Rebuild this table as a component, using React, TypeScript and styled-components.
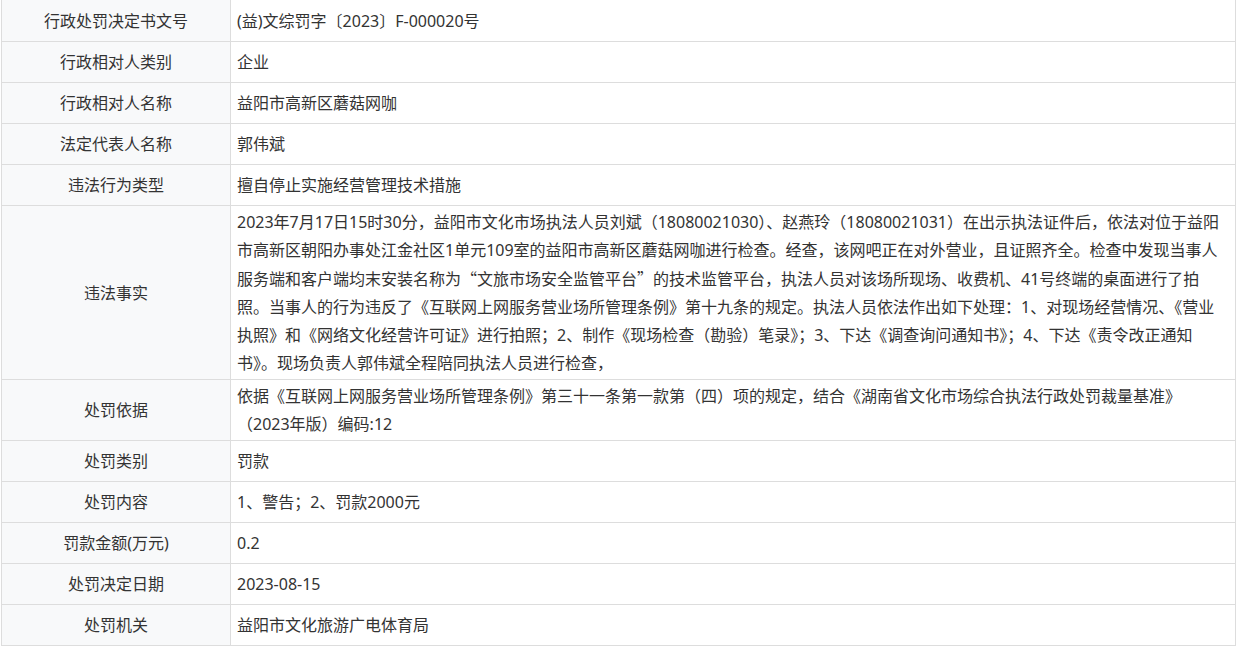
import React from "react";
import styled, { createGlobalStyle } from "styled-components";

const GlobalStyle = createGlobalStyle`
  html, body {
    margin: 0;
    padding: 0;
    background: #ffffff;
  }
  body {
    font-family: "Noto Sans", "Noto Sans CJK SC", sans-serif;
    color: #333333;
  }
`;

const Page = styled.div`
  padding: 0 2px 0 1px;
`;

const Table = styled.div`
  display: flex;
  flex-direction: column;
  border: 1px solid #dddddd;
  border-top: none;
  font-size: 16px;
  line-height: 28px;
`;

const Row = styled.div`
  display: grid;
  grid-template-columns: 229px 1fr;
  min-height: 40px;
  border-bottom: 1px solid #dddddd;
  &:first-child {
    min-height: 41px;
  }
  &:last-child {
    border-bottom: none;
  }
`;

const Label = styled.div`
  display: flex;
  align-items: center;
  justify-content: center;
  text-align: center;
  padding: 2px 6px;
  background: #f8f9fa;
  border-right: 1px solid #dddddd;
  color: #333333;
`;

const Value = styled.div`
  display: flex;
  align-items: center;
  padding: 2px 10px 2px 6px;
  background: #ffffff;
  color: #333333;
  word-break: normal;
  line-break: strict;
`;

const Text = styled.div`
  width: 100%;
`;

const Quote = styled.span<{ $open?: boolean }>`
  display: inline-block;
  width: 1em;
  text-align: ${(p) => (p.$open ? "right" : "left")};
  font-family: "Noto Sans CJK SC", sans-serif;
`;

type Item = { label: string; value: React.ReactNode };

const items: Item[] = [
  { label: "行政处罚决定书文号", value: "(益)文综罚字〔2023〕F-000020号" },
  { label: "行政相对人类别", value: "企业" },
  { label: "行政相对人名称", value: "益阳市高新区蘑菇网咖" },
  { label: "法定代表人名称", value: "郭伟斌" },
  { label: "违法行为类型", value: "擅自停止实施经营管理技术措施" },
  {
    label: "违法事实",
    value: (
      <>
        2023年7月17日15时30分，益阳市文化市场执法人员刘斌（18080021030）、赵燕玲（18080021031）在出示执法证件后，依法对位于益阳市高新区朝阳办事处江金社区1单元109室的益阳市高新区蘑菇网咖进行检查。经查，该网吧正在对外营业，且证照齐全。检查中发现当事人服务端和客户端均末安装名称为
        <Quote $open>“</Quote>文旅市场安全监管平台<Quote>”</Quote>
        的技术监管平台，执法人员对该场所现场、收费机、41号终端的桌面进行了拍照。当事人的行为违反了《互联网上网服务营业场所管理条例》第十九条的规定。执法人员依法作出如下处理：1、对现场经营情况、《营业执照》和《网络文化经营许可证》进行拍照；2、制作《现场检查（勘验）笔录》；3、下达《调查询问通知书》；4、下达《责令改正通知书》。现场负责人郭伟斌全程陪同执法人员进行检查，
      </>
    ),
  },
  {
    label: "处罚依据",
    value:
      "依据《互联网上网服务营业场所管理条例》第三十一条第一款第（四）项的规定，结合《湖南省文化市场综合执法行政处罚裁量基准》（2023年版）编码:12",
  },
  { label: "处罚类别", value: "罚款" },
  { label: "处罚内容", value: "1、警告；2、罚款2000元" },
  { label: "罚款金额(万元)", value: "0.2" },
  { label: "处罚决定日期", value: "2023-08-15" },
  { label: "处罚机关", value: "益阳市文化旅游广电体育局" },
];

export default function App() {
  return (
    <>
      <GlobalStyle />
      <Page>
        <Table>
          {items.map((it) => (
            <Row key={it.label}>
              <Label>{it.label}</Label>
              <Value>
                <Text>{it.value}</Text>
              </Value>
            </Row>
          ))}
        </Table>
      </Page>
    </>
  );
}
